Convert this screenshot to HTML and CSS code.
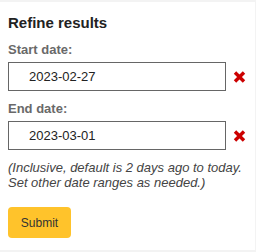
FILE: index.html
```html
<!DOCTYPE html>
<html>
<head>
<meta charset="utf-8">
<link rel="stylesheet" href="styles.css">
</head>
<body>
<div class="page">
  <div class="panel">
    <h3 class="title">Refine results</h3>
    <div class="field">
      <label class="label">Start date:</label>
      <div class="row">
        <input class="date" type="text" value="2023-02-27">
        <svg class="clear" width="13" height="12" viewBox="0 0 13 12"><path d="M2 1.5 L11 10.5 M11 1.5 L2 10.5" stroke="#cc0000" stroke-width="3.4" fill="none"/></svg>
      </div>
    </div>
    <div class="field field-next">
      <label class="label">End date:</label>
      <div class="row">
        <input class="date" type="text" value="2023-03-01">
        <svg class="clear" width="13" height="12" viewBox="0 0 13 12"><path d="M2 1.5 L11 10.5 M11 1.5 L2 10.5" stroke="#cc0000" stroke-width="3.4" fill="none"/></svg>
      </div>
    </div>
    <p class="hint">(Inclusive, default is 2 days ago to today. Set other date ranges as needed.)</p>
    <button class="submit" type="button">Submit</button>
  </div>
</div>
</body>
</html>
```
FILE: styles.css
```css
html, body {
  margin: 0;
  padding: 0;
  background: #f3f3f3;
  font-family: "Liberation Sans", Arial, sans-serif;
}
.page {
  padding: 2px 1px 0 0;
}
.panel {
  background: #ffffff;
  height: 248px;
  box-sizing: border-box;
  padding: 12px 8px 0 8px;
}
.title {
  margin: 0 0 10px 0;
  font-size: 15px;
  line-height: 18px;
  font-weight: bold;
  color: #222222;
}
.field {
  display: flex;
  flex-direction: column;
}
.field-next {
  margin-top: 10px;
}
.label {
  display: block;
  font-size: 13px;
  line-height: 16px;
  font-weight: bold;
  color: #696969;
  margin-bottom: 4px;
}
.row {
  display: flex;
  align-items: center;
  gap: 7px;
}
.date {
  box-sizing: border-box;
  width: 218px;
  height: 29px;
  margin: 0;
  border: 1px solid #666666;
  border-radius: 0;
  padding: 0 0 0 20px;
  font-family: "Liberation Sans", Arial, sans-serif;
  font-size: 13px;
  color: #222222;
  background: #ffffff;
  outline: none;
}
.clear {
  display: block;
  flex: none;
}
.hint {
  margin: 10px 0 0 0;
  font-size: 13px;
  line-height: 15px;
  font-style: italic;
  color: #444444;
}
.submit {
  display: block;
  margin-top: 17px;
  width: 63px;
  height: 31px;
  border: none;
  border-radius: 4px;
  background: #ffc32b;
  color: #333333;
  font-family: "Liberation Sans", Arial, sans-serif;
  font-size: 12px;
  padding: 0;
}
```
